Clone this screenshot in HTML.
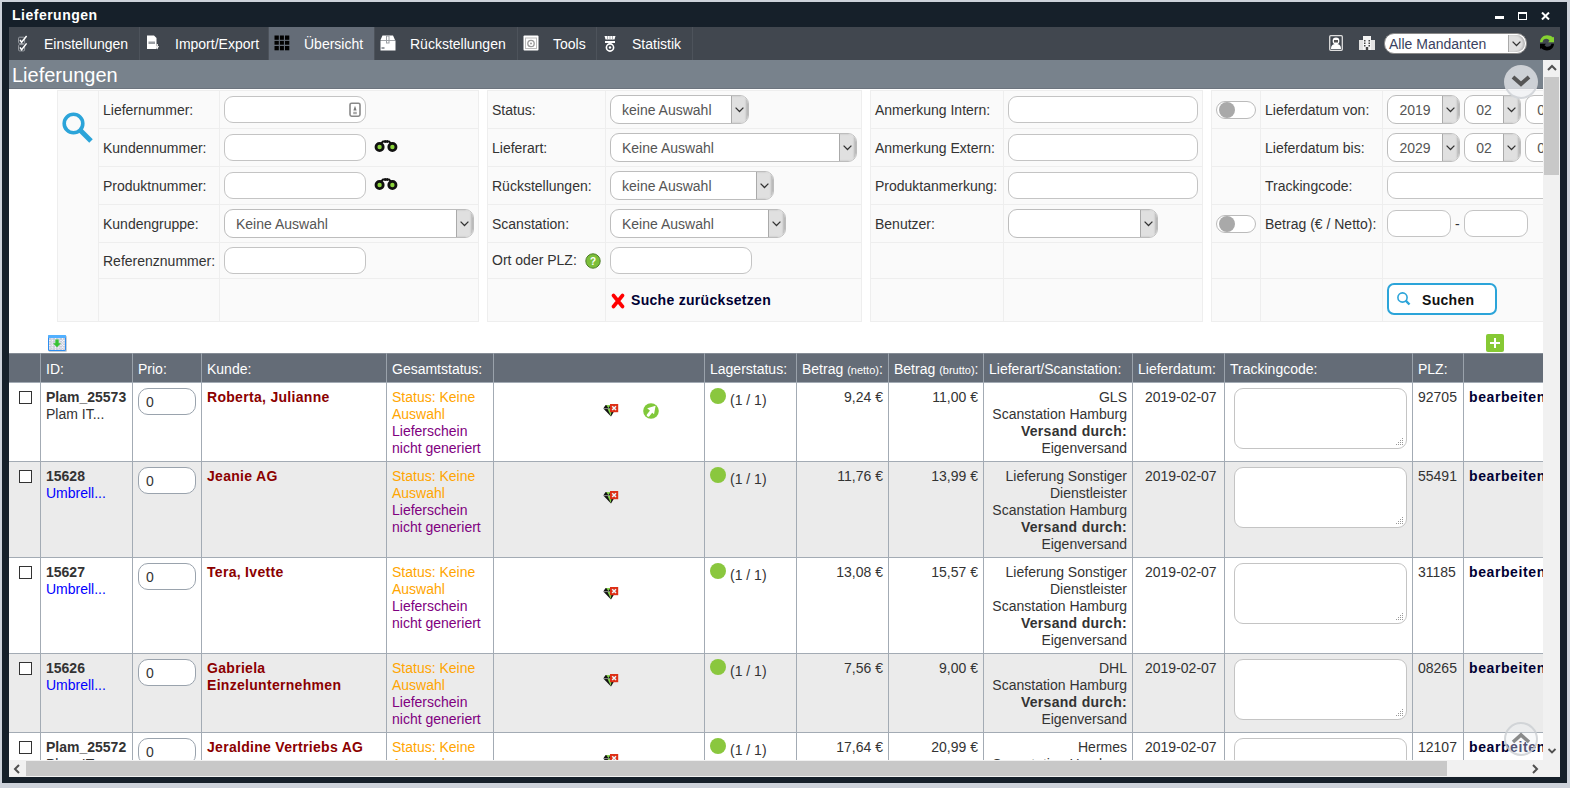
<!DOCTYPE html><html><head><meta charset="utf-8"><title>Lieferungen</title><style>
*{box-sizing:border-box;margin:0;padding:0}
html,body{width:1570px;height:788px;overflow:hidden}
body{background:#cdd2da;font-family:"Liberation Sans",sans-serif;font-size:14px;color:#333;position:relative}
.ab{position:absolute}
.win{position:absolute;left:2px;top:2px;width:1565px;height:781px;background:#16202a}
.title{position:absolute;left:12px;top:7px;color:#fff;font-weight:bold;font-size:14px;letter-spacing:0.5px;line-height:16px}
.menubar{position:absolute;left:9px;top:27px;width:1551px;height:33px;background:#41474f}
.mi{position:absolute;top:0;height:33px;color:#fff;font-size:14px;line-height:16px}
.mi .t{position:absolute;top:9px;white-space:nowrap}
.mi.act{background:#646c77}
.msep{position:absolute;top:0;width:1px;height:33px;background:#4d535b}
.hdr{position:absolute;left:9px;top:60px;width:1534px;height:29px;background:#78828c;border-bottom:1px solid #6c747e;color:#fff;font-size:20px;line-height:22px}
.content{position:absolute;left:9px;top:89px;width:1534px;height:671px;background:#fff;overflow:hidden}
.vs{position:absolute;left:1543px;top:60px;width:17px;height:717px;background:#f1f1f1}
.hs{position:absolute;left:9px;top:760px;width:1534px;height:17px;background:#f1f1f1}
.lbl{position:absolute;white-space:nowrap;line-height:16px}
.inp{position:absolute;background:#fff;border:1px solid #c4c4c4;border-radius:9px}
.sel{position:absolute;background:#fff;border:1px solid #bdbdbd;border-radius:9px;overflow:hidden;white-space:nowrap;color:#555;line-height:16px}
.sel .arr{position:absolute;right:0;top:0;bottom:0;width:17px;background:#e0e0e0;border-left:1px solid #aaa;box-shadow:inset -2px 0 2px rgba(0,0,0,0.18)}
.c{position:absolute;overflow:hidden}
</style></head><body>
<div class="win"></div>
<div class="title">Lieferungen</div>
<div class="ab" style="left:1495px;top:16px;width:9px;height:3px;background:#fff"></div>
<div class="ab" style="left:1518px;top:12px;width:9px;height:8px;border:1px solid #fff;border-top-width:2px"></div>
<svg class="ab" style="left:1541px;top:12px" width="9" height="8" viewBox="0 0 9 8"><path d="M1 0.5 L8 7.5 M8 0.5 L1 7.5" stroke="#fff" stroke-width="2"/></svg>
<div class="menubar">
<div class="mi" style="left:0px;width:130px"><span class="t" style="left:35px">Einstellungen</span></div>
<div class="mi" style="left:130px;width:129px"><span class="t" style="left:36px">Import/Export</span></div>
<div class="mi act" style="left:259px;width:106px"><span class="t" style="left:36px">Übersicht</span></div>
<div class="mi" style="left:365px;width:143px"><span class="t" style="left:36px">Rückstellungen</span></div>
<div class="mi" style="left:508px;width:79px"><span class="t" style="left:36px">Tools</span></div>
<div class="mi" style="left:587px;width:96px"><span class="t" style="left:36px">Statistik</span></div>
<div class="msep" style="left:130px"></div>
<div class="msep" style="left:259px"></div>
<div class="msep" style="left:365px"></div>
<div class="msep" style="left:508px"></div>
<div class="msep" style="left:587px"></div>
<div class="msep" style="left:683px"></div>
</div>
<div class="hdr"><span class="ab" style="left:3px;top:4px">Lieferungen</span></div>
<div class="content">
<div class="ab" style="left:-9px;top:-89px;width:1570px;height:788px">
<div class="ab" style="left:57px;top:90px;width:422px;height:232px;background:#fafafa;border:1px solid #eeeeee"></div>
<div class="ab" style="left:98px;top:90px;width:1px;height:231px;background:#eeeeee"></div>
<div class="ab" style="left:219px;top:90px;width:1px;height:231px;background:#eeeeee"></div>
<div class="ab" style="left:98px;top:128px;width:380px;height:1px;background:#eeeeee"></div>
<div class="ab" style="left:98px;top:166px;width:380px;height:1px;background:#eeeeee"></div>
<div class="ab" style="left:98px;top:204px;width:380px;height:1px;background:#eeeeee"></div>
<div class="ab" style="left:98px;top:242px;width:380px;height:1px;background:#eeeeee"></div>
<div class="ab" style="left:98px;top:278px;width:380px;height:1px;background:#eeeeee"></div>
<div class="ab" style="left:487px;top:90px;width:375px;height:232px;background:#fafafa;border:1px solid #eeeeee"></div>
<div class="ab" style="left:605px;top:90px;width:1px;height:231px;background:#eeeeee"></div>
<div class="ab" style="left:487px;top:128px;width:374px;height:1px;background:#eeeeee"></div>
<div class="ab" style="left:487px;top:166px;width:374px;height:1px;background:#eeeeee"></div>
<div class="ab" style="left:487px;top:204px;width:374px;height:1px;background:#eeeeee"></div>
<div class="ab" style="left:487px;top:242px;width:374px;height:1px;background:#eeeeee"></div>
<div class="ab" style="left:487px;top:278px;width:374px;height:1px;background:#eeeeee"></div>
<div class="ab" style="left:870px;top:90px;width:333px;height:232px;background:#fafafa;border:1px solid #eeeeee"></div>
<div class="ab" style="left:1003px;top:90px;width:1px;height:231px;background:#eeeeee"></div>
<div class="ab" style="left:870px;top:128px;width:332px;height:1px;background:#eeeeee"></div>
<div class="ab" style="left:870px;top:166px;width:332px;height:1px;background:#eeeeee"></div>
<div class="ab" style="left:870px;top:204px;width:332px;height:1px;background:#eeeeee"></div>
<div class="ab" style="left:870px;top:242px;width:332px;height:1px;background:#eeeeee"></div>
<div class="ab" style="left:870px;top:278px;width:332px;height:1px;background:#eeeeee"></div>
<div class="ab" style="left:1211px;top:90px;width:390px;height:232px;background:#fafafa;border:1px solid #eeeeee"></div>
<div class="ab" style="left:1260px;top:90px;width:1px;height:231px;background:#eeeeee"></div>
<div class="ab" style="left:1382px;top:90px;width:1px;height:231px;background:#eeeeee"></div>
<div class="ab" style="left:1211px;top:128px;width:389px;height:1px;background:#eeeeee"></div>
<div class="ab" style="left:1211px;top:166px;width:389px;height:1px;background:#eeeeee"></div>
<div class="ab" style="left:1211px;top:204px;width:389px;height:1px;background:#eeeeee"></div>
<div class="ab" style="left:1211px;top:242px;width:389px;height:1px;background:#eeeeee"></div>
<div class="ab" style="left:1211px;top:278px;width:389px;height:1px;background:#eeeeee"></div>
<div class="lbl" style="left:103px;top:102px;">Liefernummer:</div>
<div class="lbl" style="left:103px;top:140px;">Kundennummer:</div>
<div class="lbl" style="left:103px;top:178px;">Produktnummer:</div>
<div class="lbl" style="left:103px;top:216px;">Kundengruppe:</div>
<div class="lbl" style="left:103px;top:253px;">Referenznummer:</div>
<div class="inp" style="left:224px;top:96px;width:142px;height:27px;"></div>
<div class="inp" style="left:224px;top:134px;width:142px;height:27px;"></div>
<div class="inp" style="left:224px;top:172px;width:142px;height:27px;"></div>
<div class="sel" style="left:224px;top:209px;width:250px;height:29px"><span class="ab" style="left:11px;top:6px">Keine Auswahl</span><div class="arr"><svg class="ab" style="left:3px;top:11px" width="9" height="6" viewBox="0 0 9 6"><path d="M0.6 0.6 L4.5 4.5 L8.4 0.6" fill="none" stroke="#333" stroke-width="1.25"/></svg></div></div>
<div class="inp" style="left:224px;top:247px;width:142px;height:27px;"></div>
<svg class="ab" style="left:61px;top:111px" width="34" height="34" viewBox="0 0 34 34"><circle cx="12.5" cy="12.5" r="9.3" fill="none" stroke="#2ba4d9" stroke-width="3.6"/><path d="M19 19 L30 30" stroke="#2ba4d9" stroke-width="5"/></svg>
<svg class="ab" style="left:349px;top:102px" width="12" height="16" viewBox="0 0 12 16"><rect x="1" y="1.2" width="10" height="13" rx="1.6" fill="#fff" stroke="#888" stroke-width="1.6"/><path d="M6 3.8 L7.6 8.6 H4.4 Z" fill="#777"/><rect x="4.2" y="9.8" width="3.6" height="2.4" fill="#aaa"/></svg>
<svg class="ab" style="left:374px;top:140px" width="24" height="12" viewBox="0 0 24 12"><path d="M7 3.5 L9 1.5 H15 L17 3.5" fill="none" stroke="#111" stroke-width="1.8"/><rect x="10.5" y="0" width="1.3" height="3" fill="#111"/><rect x="12.5" y="0" width="1.3" height="3" fill="#111"/><circle cx="5.6" cy="7" r="3.6" fill="#8cd43c" stroke="#111" stroke-width="2.8"/><circle cx="18.4" cy="7" r="3.6" fill="#8cd43c" stroke="#111" stroke-width="2.8"/></svg>
<svg class="ab" style="left:374px;top:178px" width="24" height="12" viewBox="0 0 24 12"><path d="M7 3.5 L9 1.5 H15 L17 3.5" fill="none" stroke="#111" stroke-width="1.8"/><rect x="10.5" y="0" width="1.3" height="3" fill="#111"/><rect x="12.5" y="0" width="1.3" height="3" fill="#111"/><circle cx="5.6" cy="7" r="3.6" fill="#8cd43c" stroke="#111" stroke-width="2.8"/><circle cx="18.4" cy="7" r="3.6" fill="#8cd43c" stroke="#111" stroke-width="2.8"/></svg>
<div class="lbl" style="left:492px;top:102px;">Status:</div>
<div class="lbl" style="left:492px;top:140px;">Lieferart:</div>
<div class="lbl" style="left:492px;top:178px;">Rückstellungen:</div>
<div class="lbl" style="left:492px;top:216px;">Scanstation:</div>
<div class="lbl" style="left:492px;top:252px;">Ort oder PLZ:</div>
<div class="sel" style="left:610px;top:95px;width:139px;height:29px"><span class="ab" style="left:11px;top:6px">keine Auswahl</span><div class="arr"><svg class="ab" style="left:3px;top:11px" width="9" height="6" viewBox="0 0 9 6"><path d="M0.6 0.6 L4.5 4.5 L8.4 0.6" fill="none" stroke="#333" stroke-width="1.25"/></svg></div></div>
<div class="sel" style="left:610px;top:133px;width:247px;height:29px"><span class="ab" style="left:11px;top:6px">Keine Auswahl</span><div class="arr"><svg class="ab" style="left:3px;top:11px" width="9" height="6" viewBox="0 0 9 6"><path d="M0.6 0.6 L4.5 4.5 L8.4 0.6" fill="none" stroke="#333" stroke-width="1.25"/></svg></div></div>
<div class="sel" style="left:610px;top:171px;width:164px;height:29px"><span class="ab" style="left:11px;top:6px">keine Auswahl</span><div class="arr"><svg class="ab" style="left:3px;top:11px" width="9" height="6" viewBox="0 0 9 6"><path d="M0.6 0.6 L4.5 4.5 L8.4 0.6" fill="none" stroke="#333" stroke-width="1.25"/></svg></div></div>
<div class="sel" style="left:610px;top:209px;width:176px;height:29px"><span class="ab" style="left:11px;top:6px">Keine Auswahl</span><div class="arr"><svg class="ab" style="left:3px;top:11px" width="9" height="6" viewBox="0 0 9 6"><path d="M0.6 0.6 L4.5 4.5 L8.4 0.6" fill="none" stroke="#333" stroke-width="1.25"/></svg></div></div>
<div class="inp" style="left:610px;top:247px;width:142px;height:27px;"></div>
<svg class="ab" style="left:585px;top:253px" width="16" height="16" viewBox="0 0 16 16"><circle cx="8" cy="8" r="7.2" fill="#7cbf3a" stroke="#4d7d2a" stroke-width="1"/><text x="8" y="12" text-anchor="middle" font-family="Liberation Sans" font-size="10" font-weight="bold" fill="#fff">?</text></svg>
<svg class="ab" style="left:611px;top:293px" width="14" height="16" viewBox="0 0 14 16"><path d="M2.5 2.5 L11.5 13.5 M11.5 2.5 L2.5 13.5" stroke="#f00" stroke-width="3.6" stroke-linecap="round"/></svg>
<div class="lbl" style="left:631px;top:292px;font-weight:bold;color:#000033;letter-spacing:0.3px">Suche zurücksetzen</div>
<div class="lbl" style="left:875px;top:102px;">Anmerkung Intern:</div>
<div class="lbl" style="left:875px;top:140px;">Anmerkung Extern:</div>
<div class="lbl" style="left:875px;top:178px;">Produktanmerkung:</div>
<div class="lbl" style="left:875px;top:216px;">Benutzer:</div>
<div class="inp" style="left:1008px;top:96px;width:190px;height:27px;"></div>
<div class="inp" style="left:1008px;top:134px;width:190px;height:27px;"></div>
<div class="inp" style="left:1008px;top:172px;width:190px;height:27px;"></div>
<div class="sel" style="left:1008px;top:209px;width:150px;height:29px"><span class="ab" style="left:11px;top:6px"></span><div class="arr"><svg class="ab" style="left:3px;top:11px" width="9" height="6" viewBox="0 0 9 6"><path d="M0.6 0.6 L4.5 4.5 L8.4 0.6" fill="none" stroke="#333" stroke-width="1.25"/></svg></div></div>
<div class="lbl" style="left:1265px;top:102px;">Lieferdatum von:</div>
<div class="lbl" style="left:1265px;top:140px;">Lieferdatum bis:</div>
<div class="lbl" style="left:1265px;top:178px;">Trackingcode:</div>
<div class="lbl" style="left:1265px;top:216px;">Betrag (€ / Netto):</div>
<div class="ab" style="left:1216px;top:101px;width:40px;height:18px;border:1px solid #bbb;border-radius:9px;background:#fff"></div>
<div class="ab" style="left:1219px;top:102px;width:16px;height:16px;border-radius:50%;background:#a9a9a9"></div>
<div class="ab" style="left:1216px;top:215px;width:40px;height:18px;border:1px solid #bbb;border-radius:9px;background:#fff"></div>
<div class="ab" style="left:1219px;top:216px;width:16px;height:16px;border-radius:50%;background:#a9a9a9"></div>
<div class="sel" style="left:1387px;top:95px;width:73px;height:29px"><span class="ab" style="left:-1px;width:56px;text-align:center;top:6px">2019</span><div class="arr"><svg class="ab" style="left:3px;top:11px" width="9" height="6" viewBox="0 0 9 6"><path d="M0.6 0.6 L4.5 4.5 L8.4 0.6" fill="none" stroke="#333" stroke-width="1.25"/></svg></div></div>
<div class="sel" style="left:1464px;top:95px;width:57px;height:29px"><span class="ab" style="left:-1px;width:40px;text-align:center;top:6px">02</span><div class="arr"><svg class="ab" style="left:3px;top:11px" width="9" height="6" viewBox="0 0 9 6"><path d="M0.6 0.6 L4.5 4.5 L8.4 0.6" fill="none" stroke="#333" stroke-width="1.25"/></svg></div></div>
<div class="sel" style="left:1525px;top:95px;width:57px;height:29px"><span class="ab" style="left:-1px;width:40px;text-align:center;top:6px">02</span><div class="arr"><svg class="ab" style="left:3px;top:11px" width="9" height="6" viewBox="0 0 9 6"><path d="M0.6 0.6 L4.5 4.5 L8.4 0.6" fill="none" stroke="#333" stroke-width="1.25"/></svg></div></div>
<div class="sel" style="left:1387px;top:133px;width:73px;height:29px"><span class="ab" style="left:-1px;width:56px;text-align:center;top:6px">2029</span><div class="arr"><svg class="ab" style="left:3px;top:11px" width="9" height="6" viewBox="0 0 9 6"><path d="M0.6 0.6 L4.5 4.5 L8.4 0.6" fill="none" stroke="#333" stroke-width="1.25"/></svg></div></div>
<div class="sel" style="left:1464px;top:133px;width:57px;height:29px"><span class="ab" style="left:-1px;width:40px;text-align:center;top:6px">02</span><div class="arr"><svg class="ab" style="left:3px;top:11px" width="9" height="6" viewBox="0 0 9 6"><path d="M0.6 0.6 L4.5 4.5 L8.4 0.6" fill="none" stroke="#333" stroke-width="1.25"/></svg></div></div>
<div class="sel" style="left:1525px;top:133px;width:57px;height:29px"><span class="ab" style="left:-1px;width:40px;text-align:center;top:6px">02</span><div class="arr"><svg class="ab" style="left:3px;top:11px" width="9" height="6" viewBox="0 0 9 6"><path d="M0.6 0.6 L4.5 4.5 L8.4 0.6" fill="none" stroke="#333" stroke-width="1.25"/></svg></div></div>
<div class="inp" style="left:1387px;top:172px;width:213px;height:27px;"></div>
<div class="inp" style="left:1387px;top:210px;width:64px;height:27px;"></div>
<div class="lbl" style="left:1455px;top:216px;">-</div>
<div class="inp" style="left:1464px;top:210px;width:64px;height:27px;"></div>
<div class="ab" style="left:1387px;top:283px;width:110px;height:32px;border:2px solid #2ba4d9;border-radius:7px;background:#fff"></div>
<svg class="ab" style="left:1396px;top:291px" width="16" height="16" viewBox="0 0 16 16"><circle cx="6.5" cy="6.5" r="4.6" fill="none" stroke="#2ba4d9" stroke-width="1.6"/><path d="M9.7 9.7 L13.5 13.5" stroke="#2ba4d9" stroke-width="2.4"/></svg>
<div class="lbl" style="left:1422px;top:292px;font-weight:bold;color:#111;letter-spacing:0.3px">Suchen</div>
<svg class="ab" style="left:47px;top:334px" width="21" height="19" viewBox="0 0 21 19"><rect x="1.5" y="1.5" width="18.5" height="16.5" rx="1.5" fill="#5e6f80" opacity="0.35"/><rect x="1" y="1" width="18" height="16" rx="1.5" fill="#2d8ef0"/><rect x="1" y="1" width="18" height="3" rx="1" fill="#52b0ff"/><rect x="2" y="4" width="16" height="12" fill="#c9ccda"/><path d="M2 6.5H18M2 9H18M2 11.5H18M2 14H18" stroke="#fff" stroke-width="0.8" stroke-dasharray="1.6 1.2"/><path d="M5 4V16M8.5 4V16M12 4V16M15.5 4V16" stroke="#fff" stroke-width="0.8" stroke-dasharray="1.6 1.2"/><path d="M8.3 5.5H11.7V9.2H14L10 13.2L6 9.2H8.3Z" fill="#37c233"/></svg>
<div class="ab" style="left:1486px;top:334px;width:18px;height:18px;border-radius:2px;background:#86c934"></div>
<div class="ab" style="left:1490px;top:342px;width:10px;height:2px;background:#fff"></div>
<div class="ab" style="left:1494px;top:338px;width:2px;height:10px;background:#fff"></div>
<div class="ab" style="left:9px;top:353px;width:1591px;height:29px;background:#646c77;border-top:1px solid #858c95"></div>
<div class="ab" style="left:40px;top:353px;width:1px;height:29px;background:#9aa2ab"></div>
<div class="ab" style="left:132px;top:353px;width:1px;height:29px;background:#9aa2ab"></div>
<div class="ab" style="left:201px;top:353px;width:1px;height:29px;background:#9aa2ab"></div>
<div class="ab" style="left:386px;top:353px;width:1px;height:29px;background:#9aa2ab"></div>
<div class="ab" style="left:493px;top:353px;width:1px;height:29px;background:#9aa2ab"></div>
<div class="ab" style="left:704px;top:353px;width:1px;height:29px;background:#9aa2ab"></div>
<div class="ab" style="left:796px;top:353px;width:1px;height:29px;background:#9aa2ab"></div>
<div class="ab" style="left:888px;top:353px;width:1px;height:29px;background:#9aa2ab"></div>
<div class="ab" style="left:983px;top:353px;width:1px;height:29px;background:#9aa2ab"></div>
<div class="ab" style="left:1132px;top:353px;width:1px;height:29px;background:#9aa2ab"></div>
<div class="ab" style="left:1224px;top:353px;width:1px;height:29px;background:#9aa2ab"></div>
<div class="ab" style="left:1412px;top:353px;width:1px;height:29px;background:#9aa2ab"></div>
<div class="ab" style="left:1463px;top:353px;width:1px;height:29px;background:#9aa2ab"></div>
<div class="lbl" style="left:46px;top:361px;color:#fff">ID:</div>
<div class="lbl" style="left:138px;top:361px;color:#fff">Prio:</div>
<div class="lbl" style="left:207px;top:361px;color:#fff">Kunde:</div>
<div class="lbl" style="left:392px;top:361px;color:#fff">Gesamtstatus:</div>
<div class="lbl" style="left:710px;top:361px;color:#fff">Lagerstatus:</div>
<div class="lbl" style="left:802px;top:361px;color:#fff">Betrag <span style="font-size:11px">(netto)</span>:</div>
<div class="lbl" style="left:894px;top:361px;color:#fff">Betrag <span style="font-size:11px">(brutto)</span>:</div>
<div class="lbl" style="left:989px;top:361px;color:#fff">Lieferart/Scanstation:</div>
<div class="lbl" style="left:1138px;top:361px;color:#fff">Lieferdatum:</div>
<div class="lbl" style="left:1230px;top:361px;color:#fff">Trackingcode:</div>
<div class="lbl" style="left:1418px;top:361px;color:#fff">PLZ:</div>
<div class="ab" style="left:9px;top:382px;width:1591px;height:79px;background:#fff;border-top:1px solid #a3abb4"></div>
<div class="ab" style="left:40px;top:382px;width:1px;height:79px;background:#a3abb4"></div>
<div class="ab" style="left:132px;top:382px;width:1px;height:79px;background:#a3abb4"></div>
<div class="ab" style="left:201px;top:382px;width:1px;height:79px;background:#a3abb4"></div>
<div class="ab" style="left:386px;top:382px;width:1px;height:79px;background:#a3abb4"></div>
<div class="ab" style="left:493px;top:382px;width:1px;height:79px;background:#a3abb4"></div>
<div class="ab" style="left:704px;top:382px;width:1px;height:79px;background:#a3abb4"></div>
<div class="ab" style="left:796px;top:382px;width:1px;height:79px;background:#a3abb4"></div>
<div class="ab" style="left:888px;top:382px;width:1px;height:79px;background:#a3abb4"></div>
<div class="ab" style="left:983px;top:382px;width:1px;height:79px;background:#a3abb4"></div>
<div class="ab" style="left:1132px;top:382px;width:1px;height:79px;background:#a3abb4"></div>
<div class="ab" style="left:1224px;top:382px;width:1px;height:79px;background:#a3abb4"></div>
<div class="ab" style="left:1412px;top:382px;width:1px;height:79px;background:#a3abb4"></div>
<div class="ab" style="left:1463px;top:382px;width:1px;height:79px;background:#a3abb4"></div>
<div class="ab" style="left:19px;top:391px;width:13px;height:13px;border:1px solid #333;background:#fff"></div>
<div class="lbl" style="left:46px;top:389px;line-height:17px;"><b>Plam_25573</b><br><span style="color:#333">Plam IT...</span></div>
<div class="inp" style="left:138px;top:388px;width:58px;height:27px;border-color:#9aa3ad;border-radius:10px"><span class="ab" style="left:7px;top:5px;color:#333">0</span></div>
<div class="lbl" style="left:207px;top:389px;line-height:17px;font-weight:bold;color:#8b0000;letter-spacing:0.3px">Roberta, Julianne</div>
<div class="lbl" style="left:392px;top:389px;line-height:17px;"><span style="color:#ffa500">Status: Keine</span><br><span style="color:#ffa500">Auswahl</span><br><span style="color:#800080">Lieferschein</span><br><span style="color:#800080">nicht generiert</span></div>
<svg class="ab" style="left:603px;top:404px" width="16" height="14" viewBox="0 0 16 14"><path d="M0.3 4.6 L2.6 1 L8 1 L12.8 4.6 L8 12.6 Z" fill="#111"/><path d="M3.2 1.1 L7.4 1.1 L5.4 4.3 Z" fill="#86d24e"/><path d="M4.6 4.9 L8.8 4.9 L7.8 12 Z" fill="#86d24e"/><path d="M0.3 4.6 H12.8" stroke="#ddd" stroke-width="0.6"/><rect x="7" y="0" width="8.2" height="8.2" fill="#dd2f16"/><path d="M9.2 2.2 L13 6 M13 2.2 L9.2 6" stroke="#eaf6fb" stroke-width="1.5"/></svg>
<svg class="ab" style="left:643px;top:403px" width="16" height="16" viewBox="0 0 16 16"><circle cx="8" cy="8" r="7.8" fill="#80c83a"/><path d="M4.2 5.2 L12.6 2.8 L11 11.2 Z" fill="#fff"/><path d="M5.2 12.2 L8.8 7.8" stroke="#fff" stroke-width="3" stroke-linecap="round"/></svg>
<div class="ab" style="left:710px;top:388px;width:16px;height:16px;border-radius:50%;background:#8ac73e"></div>
<div class="lbl" style="left:730px;top:392px;line-height:17px">(1 / 1)</div>
<div class="lbl" style="left:803px;width:80px;top:389px;line-height:17px;text-align:right;">9,24 €</div>
<div class="lbl" style="left:898px;width:80px;top:389px;line-height:17px;text-align:right;">11,00 €</div>
<div class="lbl" style="left:987px;width:140px;top:389px;line-height:17px;text-align:right;">GLS<br>Scanstation Hamburg<br><b style="letter-spacing:0.3px">Versand durch:</b><br>Eigenversand</div>
<div class="lbl" style="left:1145px;top:389px;line-height:17px;">2019-02-07</div>
<div class="inp" style="left:1234px;top:388px;width:173px;height:61px;border-color:#c4c4c4;border-radius:9px"><svg class="ab" style="right:2px;bottom:2px" width="8" height="8" viewBox="0 0 8 8"><g fill="#999"><rect x="6" y="0" width="1" height="1"/><rect x="4" y="2" width="1" height="1"/><rect x="6" y="2" width="1" height="1"/><rect x="2" y="4" width="1" height="1"/><rect x="4" y="4" width="1" height="1"/><rect x="6" y="4" width="1" height="1"/><rect x="0" y="6" width="1" height="1"/><rect x="2" y="6" width="1" height="1"/><rect x="4" y="6" width="1" height="1"/><rect x="6" y="6" width="1" height="1"/></g></svg></div>
<div class="lbl" style="left:1418px;top:389px;line-height:17px;">92705</div>
<div class="lbl" style="left:1469px;top:389px;line-height:17px;font-weight:bold;color:#000033;letter-spacing:0.6px">bearbeiten</div>
<div class="ab" style="left:9px;top:461px;width:1591px;height:96px;background:#ebebeb;border-top:1px solid #a3abb4"></div>
<div class="ab" style="left:40px;top:461px;width:1px;height:96px;background:#a3abb4"></div>
<div class="ab" style="left:132px;top:461px;width:1px;height:96px;background:#a3abb4"></div>
<div class="ab" style="left:201px;top:461px;width:1px;height:96px;background:#a3abb4"></div>
<div class="ab" style="left:386px;top:461px;width:1px;height:96px;background:#a3abb4"></div>
<div class="ab" style="left:493px;top:461px;width:1px;height:96px;background:#a3abb4"></div>
<div class="ab" style="left:704px;top:461px;width:1px;height:96px;background:#a3abb4"></div>
<div class="ab" style="left:796px;top:461px;width:1px;height:96px;background:#a3abb4"></div>
<div class="ab" style="left:888px;top:461px;width:1px;height:96px;background:#a3abb4"></div>
<div class="ab" style="left:983px;top:461px;width:1px;height:96px;background:#a3abb4"></div>
<div class="ab" style="left:1132px;top:461px;width:1px;height:96px;background:#a3abb4"></div>
<div class="ab" style="left:1224px;top:461px;width:1px;height:96px;background:#a3abb4"></div>
<div class="ab" style="left:1412px;top:461px;width:1px;height:96px;background:#a3abb4"></div>
<div class="ab" style="left:1463px;top:461px;width:1px;height:96px;background:#a3abb4"></div>
<div class="ab" style="left:19px;top:470px;width:13px;height:13px;border:1px solid #333;background:#fff"></div>
<div class="lbl" style="left:46px;top:468px;line-height:17px;"><b>15628</b><br><span style="color:#0000ff">Umbrell...</span></div>
<div class="inp" style="left:138px;top:467px;width:58px;height:27px;border-color:#9aa3ad;border-radius:10px"><span class="ab" style="left:7px;top:5px;color:#333">0</span></div>
<div class="lbl" style="left:207px;top:468px;line-height:17px;font-weight:bold;color:#8b0000;letter-spacing:0.3px">Jeanie AG</div>
<div class="lbl" style="left:392px;top:468px;line-height:17px;"><span style="color:#ffa500">Status: Keine</span><br><span style="color:#ffa500">Auswahl</span><br><span style="color:#800080">Lieferschein</span><br><span style="color:#800080">nicht generiert</span></div>
<svg class="ab" style="left:603px;top:491px" width="16" height="14" viewBox="0 0 16 14"><path d="M0.3 4.6 L2.6 1 L8 1 L12.8 4.6 L8 12.6 Z" fill="#111"/><path d="M3.2 1.1 L7.4 1.1 L5.4 4.3 Z" fill="#86d24e"/><path d="M4.6 4.9 L8.8 4.9 L7.8 12 Z" fill="#86d24e"/><path d="M0.3 4.6 H12.8" stroke="#ddd" stroke-width="0.6"/><rect x="7" y="0" width="8.2" height="8.2" fill="#dd2f16"/><path d="M9.2 2.2 L13 6 M13 2.2 L9.2 6" stroke="#eaf6fb" stroke-width="1.5"/></svg>
<div class="ab" style="left:710px;top:467px;width:16px;height:16px;border-radius:50%;background:#8ac73e"></div>
<div class="lbl" style="left:730px;top:471px;line-height:17px">(1 / 1)</div>
<div class="lbl" style="left:803px;width:80px;top:468px;line-height:17px;text-align:right;">11,76 €</div>
<div class="lbl" style="left:898px;width:80px;top:468px;line-height:17px;text-align:right;">13,99 €</div>
<div class="lbl" style="left:987px;width:140px;top:468px;line-height:17px;text-align:right;">Lieferung Sonstiger<br>Dienstleister<br>Scanstation Hamburg<br><b style="letter-spacing:0.3px">Versand durch:</b><br>Eigenversand</div>
<div class="lbl" style="left:1145px;top:468px;line-height:17px;">2019-02-07</div>
<div class="inp" style="left:1234px;top:467px;width:173px;height:61px;border-color:#c4c4c4;border-radius:9px"><svg class="ab" style="right:2px;bottom:2px" width="8" height="8" viewBox="0 0 8 8"><g fill="#999"><rect x="6" y="0" width="1" height="1"/><rect x="4" y="2" width="1" height="1"/><rect x="6" y="2" width="1" height="1"/><rect x="2" y="4" width="1" height="1"/><rect x="4" y="4" width="1" height="1"/><rect x="6" y="4" width="1" height="1"/><rect x="0" y="6" width="1" height="1"/><rect x="2" y="6" width="1" height="1"/><rect x="4" y="6" width="1" height="1"/><rect x="6" y="6" width="1" height="1"/></g></svg></div>
<div class="lbl" style="left:1418px;top:468px;line-height:17px;">55491</div>
<div class="lbl" style="left:1469px;top:468px;line-height:17px;font-weight:bold;color:#000033;letter-spacing:0.6px">bearbeiten</div>
<div class="ab" style="left:9px;top:557px;width:1591px;height:96px;background:#fff;border-top:1px solid #a3abb4"></div>
<div class="ab" style="left:40px;top:557px;width:1px;height:96px;background:#a3abb4"></div>
<div class="ab" style="left:132px;top:557px;width:1px;height:96px;background:#a3abb4"></div>
<div class="ab" style="left:201px;top:557px;width:1px;height:96px;background:#a3abb4"></div>
<div class="ab" style="left:386px;top:557px;width:1px;height:96px;background:#a3abb4"></div>
<div class="ab" style="left:493px;top:557px;width:1px;height:96px;background:#a3abb4"></div>
<div class="ab" style="left:704px;top:557px;width:1px;height:96px;background:#a3abb4"></div>
<div class="ab" style="left:796px;top:557px;width:1px;height:96px;background:#a3abb4"></div>
<div class="ab" style="left:888px;top:557px;width:1px;height:96px;background:#a3abb4"></div>
<div class="ab" style="left:983px;top:557px;width:1px;height:96px;background:#a3abb4"></div>
<div class="ab" style="left:1132px;top:557px;width:1px;height:96px;background:#a3abb4"></div>
<div class="ab" style="left:1224px;top:557px;width:1px;height:96px;background:#a3abb4"></div>
<div class="ab" style="left:1412px;top:557px;width:1px;height:96px;background:#a3abb4"></div>
<div class="ab" style="left:1463px;top:557px;width:1px;height:96px;background:#a3abb4"></div>
<div class="ab" style="left:19px;top:566px;width:13px;height:13px;border:1px solid #333;background:#fff"></div>
<div class="lbl" style="left:46px;top:564px;line-height:17px;"><b>15627</b><br><span style="color:#0000ff">Umbrell...</span></div>
<div class="inp" style="left:138px;top:563px;width:58px;height:27px;border-color:#9aa3ad;border-radius:10px"><span class="ab" style="left:7px;top:5px;color:#333">0</span></div>
<div class="lbl" style="left:207px;top:564px;line-height:17px;font-weight:bold;color:#8b0000;letter-spacing:0.3px">Tera, Ivette</div>
<div class="lbl" style="left:392px;top:564px;line-height:17px;"><span style="color:#ffa500">Status: Keine</span><br><span style="color:#ffa500">Auswahl</span><br><span style="color:#800080">Lieferschein</span><br><span style="color:#800080">nicht generiert</span></div>
<svg class="ab" style="left:603px;top:587px" width="16" height="14" viewBox="0 0 16 14"><path d="M0.3 4.6 L2.6 1 L8 1 L12.8 4.6 L8 12.6 Z" fill="#111"/><path d="M3.2 1.1 L7.4 1.1 L5.4 4.3 Z" fill="#86d24e"/><path d="M4.6 4.9 L8.8 4.9 L7.8 12 Z" fill="#86d24e"/><path d="M0.3 4.6 H12.8" stroke="#ddd" stroke-width="0.6"/><rect x="7" y="0" width="8.2" height="8.2" fill="#dd2f16"/><path d="M9.2 2.2 L13 6 M13 2.2 L9.2 6" stroke="#eaf6fb" stroke-width="1.5"/></svg>
<div class="ab" style="left:710px;top:563px;width:16px;height:16px;border-radius:50%;background:#8ac73e"></div>
<div class="lbl" style="left:730px;top:567px;line-height:17px">(1 / 1)</div>
<div class="lbl" style="left:803px;width:80px;top:564px;line-height:17px;text-align:right;">13,08 €</div>
<div class="lbl" style="left:898px;width:80px;top:564px;line-height:17px;text-align:right;">15,57 €</div>
<div class="lbl" style="left:987px;width:140px;top:564px;line-height:17px;text-align:right;">Lieferung Sonstiger<br>Dienstleister<br>Scanstation Hamburg<br><b style="letter-spacing:0.3px">Versand durch:</b><br>Eigenversand</div>
<div class="lbl" style="left:1145px;top:564px;line-height:17px;">2019-02-07</div>
<div class="inp" style="left:1234px;top:563px;width:173px;height:61px;border-color:#c4c4c4;border-radius:9px"><svg class="ab" style="right:2px;bottom:2px" width="8" height="8" viewBox="0 0 8 8"><g fill="#999"><rect x="6" y="0" width="1" height="1"/><rect x="4" y="2" width="1" height="1"/><rect x="6" y="2" width="1" height="1"/><rect x="2" y="4" width="1" height="1"/><rect x="4" y="4" width="1" height="1"/><rect x="6" y="4" width="1" height="1"/><rect x="0" y="6" width="1" height="1"/><rect x="2" y="6" width="1" height="1"/><rect x="4" y="6" width="1" height="1"/><rect x="6" y="6" width="1" height="1"/></g></svg></div>
<div class="lbl" style="left:1418px;top:564px;line-height:17px;">31185</div>
<div class="lbl" style="left:1469px;top:564px;line-height:17px;font-weight:bold;color:#000033;letter-spacing:0.6px">bearbeiten</div>
<div class="ab" style="left:9px;top:653px;width:1591px;height:79px;background:#ebebeb;border-top:1px solid #a3abb4"></div>
<div class="ab" style="left:40px;top:653px;width:1px;height:79px;background:#a3abb4"></div>
<div class="ab" style="left:132px;top:653px;width:1px;height:79px;background:#a3abb4"></div>
<div class="ab" style="left:201px;top:653px;width:1px;height:79px;background:#a3abb4"></div>
<div class="ab" style="left:386px;top:653px;width:1px;height:79px;background:#a3abb4"></div>
<div class="ab" style="left:493px;top:653px;width:1px;height:79px;background:#a3abb4"></div>
<div class="ab" style="left:704px;top:653px;width:1px;height:79px;background:#a3abb4"></div>
<div class="ab" style="left:796px;top:653px;width:1px;height:79px;background:#a3abb4"></div>
<div class="ab" style="left:888px;top:653px;width:1px;height:79px;background:#a3abb4"></div>
<div class="ab" style="left:983px;top:653px;width:1px;height:79px;background:#a3abb4"></div>
<div class="ab" style="left:1132px;top:653px;width:1px;height:79px;background:#a3abb4"></div>
<div class="ab" style="left:1224px;top:653px;width:1px;height:79px;background:#a3abb4"></div>
<div class="ab" style="left:1412px;top:653px;width:1px;height:79px;background:#a3abb4"></div>
<div class="ab" style="left:1463px;top:653px;width:1px;height:79px;background:#a3abb4"></div>
<div class="ab" style="left:19px;top:662px;width:13px;height:13px;border:1px solid #333;background:#fff"></div>
<div class="lbl" style="left:46px;top:660px;line-height:17px;"><b>15626</b><br><span style="color:#0000ff">Umbrell...</span></div>
<div class="inp" style="left:138px;top:659px;width:58px;height:27px;border-color:#9aa3ad;border-radius:10px"><span class="ab" style="left:7px;top:5px;color:#333">0</span></div>
<div class="lbl" style="left:207px;top:660px;line-height:17px;font-weight:bold;color:#8b0000;letter-spacing:0.3px">Gabriela<br>Einzelunternehmen</div>
<div class="lbl" style="left:392px;top:660px;line-height:17px;"><span style="color:#ffa500">Status: Keine</span><br><span style="color:#ffa500">Auswahl</span><br><span style="color:#800080">Lieferschein</span><br><span style="color:#800080">nicht generiert</span></div>
<svg class="ab" style="left:603px;top:674px" width="16" height="14" viewBox="0 0 16 14"><path d="M0.3 4.6 L2.6 1 L8 1 L12.8 4.6 L8 12.6 Z" fill="#111"/><path d="M3.2 1.1 L7.4 1.1 L5.4 4.3 Z" fill="#86d24e"/><path d="M4.6 4.9 L8.8 4.9 L7.8 12 Z" fill="#86d24e"/><path d="M0.3 4.6 H12.8" stroke="#ddd" stroke-width="0.6"/><rect x="7" y="0" width="8.2" height="8.2" fill="#dd2f16"/><path d="M9.2 2.2 L13 6 M13 2.2 L9.2 6" stroke="#eaf6fb" stroke-width="1.5"/></svg>
<div class="ab" style="left:710px;top:659px;width:16px;height:16px;border-radius:50%;background:#8ac73e"></div>
<div class="lbl" style="left:730px;top:663px;line-height:17px">(1 / 1)</div>
<div class="lbl" style="left:803px;width:80px;top:660px;line-height:17px;text-align:right;">7,56 €</div>
<div class="lbl" style="left:898px;width:80px;top:660px;line-height:17px;text-align:right;">9,00 €</div>
<div class="lbl" style="left:987px;width:140px;top:660px;line-height:17px;text-align:right;">DHL<br>Scanstation Hamburg<br><b style="letter-spacing:0.3px">Versand durch:</b><br>Eigenversand</div>
<div class="lbl" style="left:1145px;top:660px;line-height:17px;">2019-02-07</div>
<div class="inp" style="left:1234px;top:659px;width:173px;height:61px;border-color:#c4c4c4;border-radius:9px"><svg class="ab" style="right:2px;bottom:2px" width="8" height="8" viewBox="0 0 8 8"><g fill="#999"><rect x="6" y="0" width="1" height="1"/><rect x="4" y="2" width="1" height="1"/><rect x="6" y="2" width="1" height="1"/><rect x="2" y="4" width="1" height="1"/><rect x="4" y="4" width="1" height="1"/><rect x="6" y="4" width="1" height="1"/><rect x="0" y="6" width="1" height="1"/><rect x="2" y="6" width="1" height="1"/><rect x="4" y="6" width="1" height="1"/><rect x="6" y="6" width="1" height="1"/></g></svg></div>
<div class="lbl" style="left:1418px;top:660px;line-height:17px;">08265</div>
<div class="lbl" style="left:1469px;top:660px;line-height:17px;font-weight:bold;color:#000033;letter-spacing:0.6px">bearbeiten</div>
<div class="ab" style="left:9px;top:732px;width:1591px;height:79px;background:#fff;border-top:1px solid #a3abb4"></div>
<div class="ab" style="left:40px;top:732px;width:1px;height:79px;background:#a3abb4"></div>
<div class="ab" style="left:132px;top:732px;width:1px;height:79px;background:#a3abb4"></div>
<div class="ab" style="left:201px;top:732px;width:1px;height:79px;background:#a3abb4"></div>
<div class="ab" style="left:386px;top:732px;width:1px;height:79px;background:#a3abb4"></div>
<div class="ab" style="left:493px;top:732px;width:1px;height:79px;background:#a3abb4"></div>
<div class="ab" style="left:704px;top:732px;width:1px;height:79px;background:#a3abb4"></div>
<div class="ab" style="left:796px;top:732px;width:1px;height:79px;background:#a3abb4"></div>
<div class="ab" style="left:888px;top:732px;width:1px;height:79px;background:#a3abb4"></div>
<div class="ab" style="left:983px;top:732px;width:1px;height:79px;background:#a3abb4"></div>
<div class="ab" style="left:1132px;top:732px;width:1px;height:79px;background:#a3abb4"></div>
<div class="ab" style="left:1224px;top:732px;width:1px;height:79px;background:#a3abb4"></div>
<div class="ab" style="left:1412px;top:732px;width:1px;height:79px;background:#a3abb4"></div>
<div class="ab" style="left:1463px;top:732px;width:1px;height:79px;background:#a3abb4"></div>
<div class="ab" style="left:19px;top:741px;width:13px;height:13px;border:1px solid #333;background:#fff"></div>
<div class="lbl" style="left:46px;top:739px;line-height:17px;"><b>Plam_25572</b><br><span style="color:#333">Plam IT...</span></div>
<div class="inp" style="left:138px;top:738px;width:58px;height:27px;border-color:#9aa3ad;border-radius:10px"><span class="ab" style="left:7px;top:5px;color:#333">0</span></div>
<div class="lbl" style="left:207px;top:739px;line-height:17px;font-weight:bold;color:#8b0000;letter-spacing:0.3px">Jeraldine Vertriebs AG</div>
<div class="lbl" style="left:392px;top:739px;line-height:17px;"><span style="color:#ffa500">Status: Keine</span><br><span style="color:#ffa500">Auswahl</span><br><span style="color:#800080">Lieferschein</span><br><span style="color:#800080">nicht generiert</span></div>
<svg class="ab" style="left:603px;top:754px" width="16" height="14" viewBox="0 0 16 14"><path d="M0.3 4.6 L2.6 1 L8 1 L12.8 4.6 L8 12.6 Z" fill="#111"/><path d="M3.2 1.1 L7.4 1.1 L5.4 4.3 Z" fill="#86d24e"/><path d="M4.6 4.9 L8.8 4.9 L7.8 12 Z" fill="#86d24e"/><path d="M0.3 4.6 H12.8" stroke="#ddd" stroke-width="0.6"/><rect x="7" y="0" width="8.2" height="8.2" fill="#dd2f16"/><path d="M9.2 2.2 L13 6 M13 2.2 L9.2 6" stroke="#eaf6fb" stroke-width="1.5"/></svg>
<div class="ab" style="left:710px;top:738px;width:16px;height:16px;border-radius:50%;background:#8ac73e"></div>
<div class="lbl" style="left:730px;top:742px;line-height:17px">(1 / 1)</div>
<div class="lbl" style="left:803px;width:80px;top:739px;line-height:17px;text-align:right;">17,64 €</div>
<div class="lbl" style="left:898px;width:80px;top:739px;line-height:17px;text-align:right;">20,99 €</div>
<div class="lbl" style="left:987px;width:140px;top:739px;line-height:17px;text-align:right;">Hermes<br>Scanstation Hamburg<br><b style="letter-spacing:0.3px">Versand durch:</b><br>Eigenversand</div>
<div class="lbl" style="left:1145px;top:739px;line-height:17px;">2019-02-07</div>
<div class="inp" style="left:1234px;top:738px;width:173px;height:61px;border-color:#c4c4c4;border-radius:9px"><svg class="ab" style="right:2px;bottom:2px" width="8" height="8" viewBox="0 0 8 8"><g fill="#999"><rect x="6" y="0" width="1" height="1"/><rect x="4" y="2" width="1" height="1"/><rect x="6" y="2" width="1" height="1"/><rect x="2" y="4" width="1" height="1"/><rect x="4" y="4" width="1" height="1"/><rect x="6" y="4" width="1" height="1"/><rect x="0" y="6" width="1" height="1"/><rect x="2" y="6" width="1" height="1"/><rect x="4" y="6" width="1" height="1"/><rect x="6" y="6" width="1" height="1"/></g></svg></div>
<div class="lbl" style="left:1418px;top:739px;line-height:17px;">12107</div>
<div class="lbl" style="left:1469px;top:739px;line-height:17px;font-weight:bold;color:#000033;letter-spacing:0.6px">bearbeiten</div>
</div>
</div>
<div class="vs"></div>
<div class="hs"></div>
<div class="ab" style="left:9px;top:27px;width:1551px;height:33px"><svg class="ab" style="left:9px;top:8px" width="10" height="17" viewBox="0 0 10 17"><rect x="0.6" y="2.2" width="6" height="6.3" rx="1" fill="none" stroke="#9a9ea4" stroke-width="1"/><rect x="0.6" y="9.6" width="6" height="6.3" rx="1" fill="none" stroke="#9a9ea4" stroke-width="1"/><path d="M2 5 L3.6 7.3 L8.6 1 M2 12.4 L3.6 14.7 L8.6 8.4" fill="none" stroke="#fff" stroke-width="1.5"/></svg><svg class="ab" style="left:137px;top:8px" width="14" height="16" viewBox="0 0 14 16"><path d="M1 0.5 H8 L10.5 3 V14 H1 Z" fill="#fff"/><rect x="2.5" y="6.5" width="6.5" height="2.5" fill="#9a9ea3"/><path d="M9.5 11 H13 L11.25 14.5 Z" fill="#fff"/><rect x="10.5" y="9" width="1.5" height="3" fill="#ddd"/></svg><svg class="ab" style="left:265px;top:8px" width="16" height="16" viewBox="0 0 16 16"><g fill="#000"><rect x="0.5" y="0.5" width="4.3" height="4.3"/><rect x="5.9" y="0.5" width="4" height="4.3"/><rect x="11" y="0.5" width="4.3" height="4.3"/><rect x="0.5" y="5.9" width="4.3" height="3.8"/><rect x="5.9" y="5.9" width="4" height="3.8"/><rect x="11" y="5.9" width="4.3" height="3.8"/><rect x="0.5" y="11" width="4.3" height="4.3"/><rect x="5.9" y="11" width="4" height="4.3"/><rect x="11" y="11" width="4.3" height="4.3"/></g></svg><svg class="ab" style="left:371px;top:8px" width="16" height="16" viewBox="0 0 16 16"><path d="M2.5 0.5 H13 L15 5 H0.5 Z" fill="#fff"/><rect x="0.5" y="5.5" width="15" height="10" fill="#fff"/><rect x="6.5" y="1" width="2.5" height="7" fill="none" stroke="#9a9ea3" stroke-width="1"/><rect x="1.5" y="12" width="3" height="2" fill="#9a9ea3"/></svg><svg class="ab" style="left:514px;top:8px" width="16" height="16" viewBox="0 0 16 16"><rect x="0.5" y="0.5" width="15" height="15" rx="1" fill="#fff"/><rect x="2.5" y="3" width="11" height="10.5" fill="#fff" stroke="#bbb" stroke-width="1"/><circle cx="8" cy="8.5" r="3.2" fill="none" stroke="#999" stroke-width="1.3"/><circle cx="8" cy="8.5" r="1" fill="#999"/></svg><svg class="ab" style="left:595px;top:8px" width="12" height="17" viewBox="0 0 12 17"><path d="M0.5 1 H11.5 L10.5 4.5 H1.5 Z" fill="#fff"/><path d="M3.5 1V4.5M6 1V4.5M8.5 1V4.5" stroke="#9a9ea3" stroke-width="0.8"/><rect x="1" y="6" width="10" height="2" fill="#fff"/><circle cx="6" cy="12.5" r="3.6" fill="none" stroke="#fff" stroke-width="1.6"/><circle cx="6" cy="12.5" r="1.2" fill="#fff"/></svg><svg class="ab" style="left:1320px;top:8px" width="14" height="16" viewBox="0 0 14 16"><rect x="0.7" y="0.7" width="12.6" height="14.6" rx="1" fill="none" stroke="#ddd" stroke-width="1.3"/><path d="M2 14 C2 10 4 9 7 9 C10 9 12 10 12 14 Z" fill="#fff"/><circle cx="7" cy="6" r="3.4" fill="#fff"/><rect x="5" y="5" width="4" height="2.5" fill="#555"/></svg><svg class="ab" style="left:1350px;top:9px" width="16" height="14" viewBox="0 0 16 14"><rect x="4" y="0" width="8" height="14" fill="#eee"/><rect x="0" y="4" width="16" height="10" fill="#e2e2e2"/><rect x="4" y="0" width="8" height="14" fill="#f4f4f4"/><g fill="#444"><rect x="5" y="4" width="1.5" height="1.5"/><rect x="9.5" y="4" width="1.5" height="1.5"/><rect x="5" y="6.5" width="1.5" height="1.5"/><rect x="9.5" y="6.5" width="1.5" height="1.5"/><rect x="5" y="9" width="1.5" height="1.5"/><rect x="9.5" y="9" width="1.5" height="1.5"/><rect x="6.8" y="11" width="2.4" height="3"/></g></svg><div class="sel" style="left:1375px;top:6px;width:143px;height:21px;border:1px solid #888;border-radius:10px;color:#334"><span class="ab" style="left:4px;top:2px;color:#3a3f60">Alle Mandanten</span><div class="arr" style="width:17px;top:1px;bottom:1px;right:1px;border-radius:0 9px 9px 0;background:#e0e0e0"><svg class="ab" style="left:3px;top:6px" width="9" height="6" viewBox="0 0 9 6"><path d="M0.6 0.6 L4.5 4.5 L8.4 0.6" fill="none" stroke="#333" stroke-width="1.25"/></svg></div></div><svg class="ab" style="left:1527px;top:4px" width="22" height="22" viewBox="0 0 22 22"><path d="M4 11.3 C4 7 7.5 4.2 11 4.2 C13.5 4.2 15.5 5 17 6.5 L18 5.8 L18 11.3 L12 11.3 L13.5 9.8 C12.7 8.6 11.8 7.8 10.5 7.8 C8 7.8 6.6 9.5 6.6 11.3 Z" fill="#86d232"/><path d="M18 12.8 C18 16.5 15 19.5 11 19.5 C8.5 19.5 6.5 18.5 5 17 L4 18.2 L4 12.8 L10 12.8 L8.5 14.3 C9.3 15.2 10.2 15.8 11.3 15.8 C13.5 15.8 15.4 14.5 15.4 12.8 Z" fill="#000"/></svg></div>
<svg class="ab" style="left:1547px;top:63px" width="10" height="10" viewBox="0 0 10 10"><path d="M1 7 L5 3 L9 7" fill="none" stroke="#505050" stroke-width="2"/></svg>
<div class="ab" style="left:1544px;top:77px;width:15px;height:98px;background:#c8c8c8"></div>
<svg class="ab" style="left:1547px;top:746px" width="10" height="10" viewBox="0 0 10 10"><path d="M1.5 3 L5 6.5 L8.5 3" fill="none" stroke="#505050" stroke-width="1.8"/></svg>
<div class="ab" style="left:26px;top:761px;width:1421px;height:15px;background:#c8c8c8"></div>
<svg class="ab" style="left:12px;top:764px" width="10" height="10" viewBox="0 0 10 10"><path d="M7 1 L3 5 L7 9" fill="none" stroke="#505050" stroke-width="2"/></svg>
<svg class="ab" style="left:1530px;top:764px" width="10" height="10" viewBox="0 0 10 10"><path d="M3 1 L7 5 L3 9" fill="none" stroke="#505050" stroke-width="2"/></svg>
<div class="ab" style="left:1543px;top:760px;width:17px;height:17px;background:#f1f1f1"></div>
<div class="ab" style="left:1504px;top:65px;width:34px;height:34px;border-radius:50%;background:rgba(238,240,242,0.72);border:2px solid rgba(205,208,212,0.8)"></div>
<svg class="ab" style="left:1510px;top:74px" width="22" height="14" viewBox="0 0 22 14"><path d="M3 3 L11 10 L19 3" fill="none" stroke="#555" stroke-width="4"/></svg>
<div class="ab" style="left:1504px;top:722px;width:34px;height:34px;border-radius:50%;background:rgba(235,237,240,0.35);border:2px solid rgba(200,203,207,0.75)"></div>
<svg class="ab" style="left:1510px;top:731px" width="22" height="14" viewBox="0 0 22 14"><path d="M3 11 L11 4 L19 11" fill="none" stroke="rgba(100,100,100,0.75)" stroke-width="3.6"/></svg>
</body></html>
